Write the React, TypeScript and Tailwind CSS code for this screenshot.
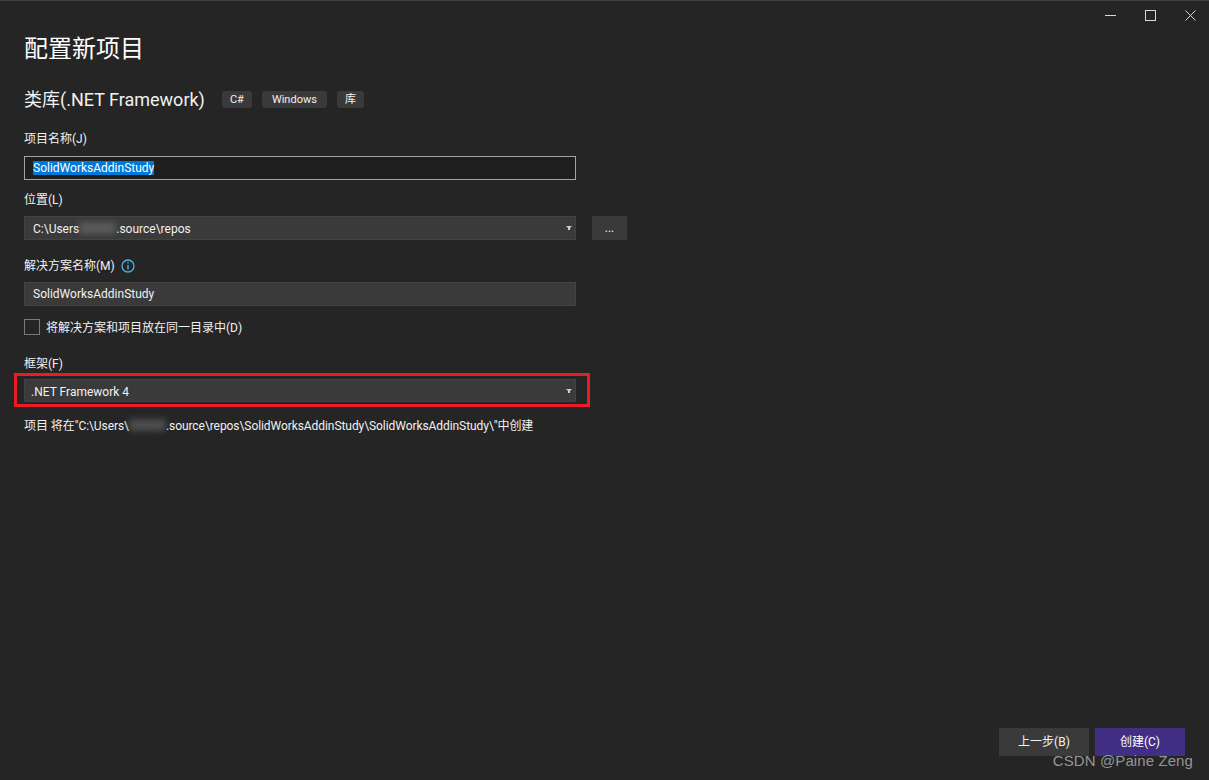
const font = "font-['Roboto','Noto_Sans_CJK_SC',sans-serif]";

function Chevron() {
  return (
    <svg width="6" height="4" viewBox="0 0 6 4" className="shrink-0">
      <path d="M0 0h6L4 2v2H2V2z" fill="#d0d0d0" />
    </svg>
  );
}

function Label({ children }: { children: React.ReactNode }) {
  return <div className="h-4 text-xs leading-4 text-[#f1f1f1]">{children}</div>;
}

function Blurred() {
  return <span className="inline-block h-3 w-[37px] bg-[#8a8a8a]/40 align-[-1px] blur-[3px]" />;
}

function Select({ children, className }: { children: React.ReactNode; className?: string }) {
  return (
    <div className={`flex w-[552px] items-center justify-between border border-[#434346] bg-[#3a3a3b] pr-[3px] text-xs text-[#f1f1f1] ${className ?? ''}`}>
      {children}
      <Chevron />
    </div>
  );
}

function Tag({ children, className }: { children: React.ReactNode; className: string }) {
  return (
    <span className={`flex h-[17px] items-center justify-center rounded-[3px] bg-[#3a3a3b] pt-[2px] text-[11px] text-[#f1f1f1] ${className}`}>
      {children}
    </span>
  );
}

export default function App() {
  return (
    <div className={`relative flex h-[780px] w-[1209px] flex-col overflow-hidden border-t border-[#404041] bg-[#252526] ${font}`}>
      <div className="flex h-[27px] shrink-0 items-center justify-end pt-[1px] pr-[13px] text-[#d8d8d8]">
        <svg width="11" height="11" viewBox="0 0 11 11" className="mr-[29px]" fill="none" stroke="currentColor">
          <path d="M0 5.5h11" />
        </svg>
        <svg width="11" height="11" viewBox="0 0 11 11" className="mr-[29px]" fill="none" stroke="currentColor">
          <rect x="0.5" y="0.5" width="10" height="10" />
        </svg>
        <svg width="11" height="11" viewBox="0 0 11 11" fill="none" stroke="currentColor">
          <path d="M0.5 0.5l10 10M10.5 0.5l-10 10" />
        </svg>
      </div>

      <div className="flex flex-col pl-6">
        <h1 className="mt-[5px] h-8 text-2xl leading-8 text-white">配置新项目</h1>

        <div className="mt-[23px] flex h-[22px] items-center">
          <span className="pt-[2px] text-lg leading-[22px] text-[#f1f1f1]">类库(.NET Framework)</span>
          <div className="ml-[17px] flex gap-[10px]">
            <Tag className="w-[30px]">C#</Tag>
            <Tag className="w-[65px]">Windows</Tag>
            <Tag className="w-[27px]">库</Tag>
          </div>
        </div>

        <div className="mt-[21px]"><Label>项目名称(J)</Label></div>
        <div className="mt-[9px] flex h-6 w-[552px] items-center border border-[#a3a3a3] bg-[#1f1f20] pl-2 text-xs text-[#f1f1f1]">
          <span className="bg-[#0078d7] leading-[14px] text-white">SolidWorksAddinStudy</span>
        </div>

        <div className="mt-[12px]"><Label>位置(L)</Label></div>
        <div className="mt-[8px] flex gap-4">
          <Select className="h-6 pl-2">
            <span className="pt-[2px]">C:\Users<Blurred />.source\repos</span>
          </Select>
          <div className="flex h-6 w-[35px] items-center justify-center bg-[#3a3a3b] text-xs leading-none text-[#f1f1f1]">...</div>
        </div>

        <div className="mt-[18px] flex items-center gap-[6px]">
          <Label>解决方案名称(M)</Label>
          <svg width="14" height="14" viewBox="0 0 14 14" fill="none">
            <circle cx="7" cy="7" r="6" stroke="#4fb3e8" strokeWidth="1.3" />
            <path d="M7 3.2v1.4M7 6v4.6" stroke="#4fb3e8" strokeWidth="1.4" />
          </svg>
        </div>
        <div className="mt-[8px] flex h-6 w-[552px] items-center border border-[#434346] bg-[#3a3a3b] pl-2 text-xs text-[#f1f1f1]">
          SolidWorksAddinStudy
        </div>

        <div className="mt-[13px] flex h-4 items-center gap-[6px]">
          <div className="size-4 border border-[#7a7a7a]" />
          <span className="pt-[2px] text-xs text-[#f1f1f1]">将解决方案和项目放在同一目录中(D)</span>
        </div>

        <div className="mt-[21px]"><Label>框架(F)</Label></div>
        <div className="mt-[1px] -ml-[10px] w-[576px] border-[3px] border-[#ed1c24] pt-[3px] pr-[7px] pb-[2px] pl-[7px]">
          <Select className="h-[23px] pl-[6px]">
            <span className="pt-[2px]">.NET Framework 4</span>
          </Select>
        </div>

        <div className="mt-[10px] h-4 pt-[1px] text-xs leading-4 tracking-[-0.07px] text-[#f1f1f1]">
          项目 将在"C:\Users\<Blurred />.source\repos\SolidWorksAddinStudy\SolidWorksAddinStudy\"中创建
        </div>
      </div>

      <div className="mt-auto mb-[24px] flex justify-end gap-[6px] pr-6">
        <button className="h-7 w-[90px] bg-[#3a3a3b] text-xs text-[#f1f1f1]">上一步(B)</button>
        <button className="h-7 w-[90px] bg-[#402f85] text-xs text-white">创建(C)</button>
      </div>

      <div className="absolute right-4 bottom-[10px] font-['Liberation_Sans',sans-serif] text-[15px] leading-[18px] tracking-[0.1px] text-[#b4b4b4]/80">
        CSDN @Paine Zeng
      </div>
    </div>
  );
}
